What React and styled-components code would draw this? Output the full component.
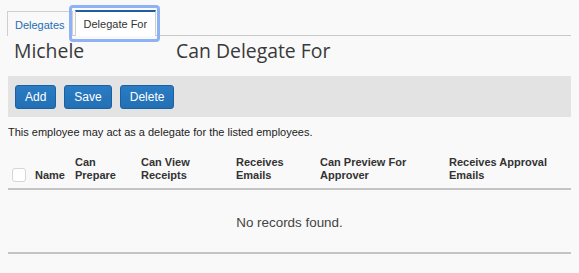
import React from 'react';
import styled, { createGlobalStyle } from 'styled-components';

const GlobalStyle = createGlobalStyle`
  html, body {
    margin: 0;
    background: #f9f9f9;
  }
  body {
    font-family: 'Liberation Sans', Arial, sans-serif;
    color: #333;
  }
`;

const Page = styled.div`
  width: 563px;
  padding: 0 8px;
`;

const TabBar = styled.div`
  display: flex;
  align-items: flex-end;
  height: 35px;
  border-bottom: 1px solid #c9c9c9;
  gap: 2px;
  margin-left: -1px;
`;

const Tab = styled.div`
  position: relative;
  padding: 0 ${p => (p.$active ? 8 : 7)}px;
  display: flex;
  align-items: center;
  font-size: 11px;
  box-sizing: border-box;
  border: 1px solid #cfcfcf;
  border-bottom: none;
  margin-bottom: -1px;
  background: ${p => (p.$active ? '#fff' : '#f9f9f9')};
  color: ${p => (p.$active ? '#333' : '#1f6db3')};
  border-top: ${p => (p.$active ? '2px solid #1f5f9e' : '1px solid #cfcfcf')};
  height: ${p => (p.$active ? '26px' : '25px')};
  padding-top: ${p => (p.$active ? '0' : '1px')};

  ${p => p.$active && `
    &::after {
      content: '';
      position: absolute;
      left: -7px;
      right: -5px;
      top: -7px;
      bottom: -6px;
      border: 3px solid #8fb2f5;
      border-radius: 4px;
      pointer-events: none;
    }
  `}
`;

const TitleRow = styled.div`
  display: flex;
  height: 28px;
  align-items: center;
  padding-left: 6px;
  font-family: 'Open Sans', sans-serif;
  font-size: 19.4px;
  font-weight: 400;
  color: #3a3a3a;
`;

const Name = styled.span`
  width: 162px;
`;

const Toolbar = styled.div`
  margin-top: 12px;
  height: 41px;
  background: #e2e3e2;
  display: flex;
  align-items: center;
  gap: 8px;
  padding: 1px 7px 0;
  box-sizing: border-box;
`;

const Button = styled.button`
  height: 24px;
  padding: 0 9px;
  border: 1px solid #1b609f;
  border-radius: 3px;
  background: linear-gradient(#2b7cc4, #226fb4);
  color: #fff;
  font-family: 'Liberation Sans', Arial, sans-serif;
  font-size: 12px;
  font-weight: 400;
  cursor: pointer;
`;

const Note = styled.p`
  margin: 9px 0 0;
  font-size: 11px;
  color: #222;
`;

const HeaderRow = styled.div`
  display: grid;
  grid-template-columns: 27px 40px 66px 95px 84px 129px 1fr;
  align-items: end;
  margin-top: 18px;
  padding-bottom: 6px;
  border-bottom: 2px solid #c4c4c4;
  font-size: 11px;
  font-weight: 700;
  line-height: 13px;
  color: #333;
`;

const CheckBox = styled.span`
  display: block;
  width: 12px;
  height: 12px;
  margin-left: 4px;
  border: 1px solid #d6d6d6;
  border-radius: 3px;
  background: #fff;
`;

const Empty = styled.div`
  height: 64px;
  display: flex;
  align-items: center;
  justify-content: center;
  padding-top: 3px;
  box-sizing: border-box;
  border-bottom: 2px solid #c4c4c4;
  font-size: 13.4px;
  color: #444;
`;

const columns = [
  ['Name'],
  ['Can', 'Prepare'],
  ['Can View', 'Receipts'],
  ['Receives', 'Emails'],
  ['Can Preview For', 'Approver'],
  ['Receives Approval', 'Emails'],
];

export default function App() {
  return (
    <Page>
      <GlobalStyle />
      <TabBar>
        <Tab>Delegates</Tab>
        <Tab $active>Delegate For</Tab>
      </TabBar>
      <TitleRow>
        <Name>Michele</Name>
        <span>Can Delegate For</span>
      </TitleRow>
      <Toolbar>
        <Button>Add</Button>
        <Button>Save</Button>
        <Button>Delete</Button>
      </Toolbar>
      <Note>This employee may act as a delegate for the listed employees.</Note>
      <HeaderRow>
        <CheckBox />
        {columns.map((c, i) => (
          <div key={i}>
            {c.map((line, j) => (
              <div key={j}>{line}</div>
            ))}
          </div>
        ))}
      </HeaderRow>
      <Empty>No records found.</Empty>
    </Page>
  );
}
